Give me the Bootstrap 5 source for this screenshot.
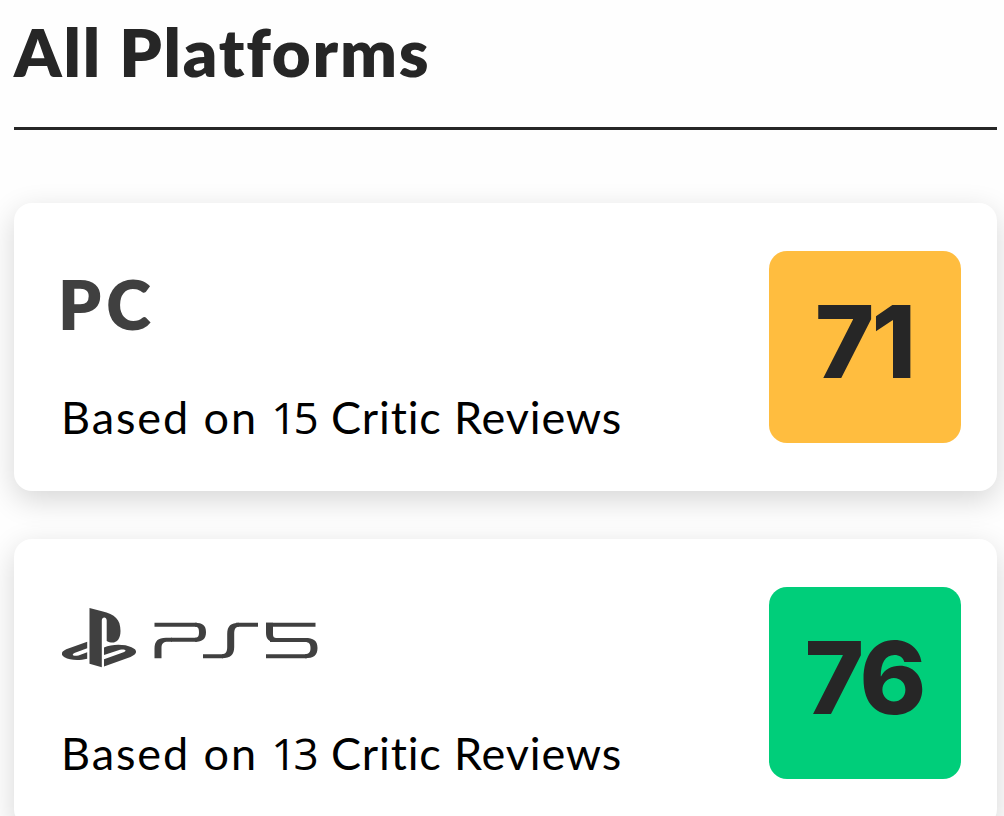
<!DOCTYPE html>
<html lang="en">
<head>
    <meta charset="UTF-8">
    <meta name="viewport" content="width=device-width, initial-scale=1.0">
    <title>All Platforms</title>
    <link href="https://cdn.jsdelivr.net/npm/bootstrap@5.3.0/dist/css/bootstrap.min.css" rel="stylesheet">
    <style>
        body {
            font-family: Lato, "Liberation Sans", sans-serif;
            background-color: #fefefe;
            color: #262626;
            overflow: hidden;
        }

        .platforms {
            padding: 9px 7px 0 14px;
        }

        .platforms-title {
            height: 121px;
            font-size: 67px;
            line-height: 84px;
            font-weight: 800;
            letter-spacing: 1.8px;
            border-bottom: 3px solid #262626;
            margin-bottom: 73px;
        }

        .platform-list {
            gap: 48px;
        }

        /* platform cards */
        .platform-card {
            height: 288px;
            padding: 48px 36px 48px 48px;
            border-radius: 18px;
            background-color: #fff;
            box-shadow: 0 9px 30px rgba(0, 0, 0, 0.16);
        }

        .platform-name {
            height: 102px;
            color: #404040;
            font-size: 68px;
            line-height: 106px;
            font-weight: 800;
            letter-spacing: 5px;
        }

        .platform-label {
            margin-left: -4px;
        }

        .review-count {
            color: #000;
            font-size: 45px;
            line-height: 60px;
            margin-top: 34px;
            margin-left: -1px;
            letter-spacing: 0.85px;
        }

        .review-prefix {
            letter-spacing: 1.9px;
        }

        .count {
            font-family: "Open Sans", sans-serif;
            font-size: 44px;
            letter-spacing: -3px;
            margin-right: 3px;
        }

        /* score tiles */
        .score {
            width: 192px;
            height: 192px;
            padding: 0 2px 12px 0;
            border-radius: 18px;
            font-family: Inter, sans-serif;
            font-size: 101px;
            line-height: 1;
            font-weight: 800;
            letter-spacing: -3px;
        }

        .score-mixed {
            background-color: #ffbd3f;
        }

        .score-good {
            background-color: #00ce7a;
        }
    </style>
</head>
<body>

    <main class="platforms">
        <h1 class="platforms-title">All Platforms</h1>

        <div class="platform-list d-flex flex-column">
            <section class="platform-card d-flex justify-content-between">
                <div>
                    <h2 class="platform-name platform-label mb-0">PC</h2>
                    <p class="review-count mb-0"><span class="review-prefix">Based on </span><span class="count">15</span> Critic Reviews</p>
                </div>
                <div class="score score-mixed d-flex align-items-center justify-content-center">71</div>
            </section>

            <section class="platform-card d-flex justify-content-between">
                <div>
                    <div class="platform-name d-flex align-items-center">
                        <svg width="257" height="60" viewBox="62 608 257 60" fill="#404040" role="img" aria-label="PlayStation 5">
                            <!-- PlayStation symbol -->
                            <path d="M89.5 608 L102 611.2 C115 614.5 120.5 619 120.5 631 C120.5 641.5 114 645 106.7 641 L106.7 620.5 C106.7 616.5 101.8 616.5 101.8 620.5 L101.8 667.3 L89.5 663.7 Z"/>
                            <path d="M87.2 641.8 L87.2 648.2 L75 652.8 C70.5 655 73.5 656.3 78.5 655.4 L87.2 652.2 L87.2 658.7 C78 661 69.5 660 64.5 657.2 C60 654.5 61 650.8 69 648.3 Z"/>
                            <path d="M104 647.5 C112 644 124.5 644 131.5 647.3 C138.5 650.2 137 654.3 130.5 656.9 L104 666.5 L104 659.2 L123.5 652.3 C127.8 650.2 124.5 648.8 120 649.7 L104 655 Z"/>
                            <!-- PS5 wordmark -->
                            <g fill="none" stroke="#404040">
                                <path stroke-width="4" d="M154.5 624.8 H197 M171 639.8 H197 M203 656.2 H223 M236 624.8 H258 M266 624.8 H315.5 M270 640 H307 M266 656.2 H307"/>
                            </g>
                            <path d="M195 622.8 C202.5 622.8 206 625.5 206 632.2 C206 639 202.5 641.8 195 641.8 V637.8 C198 637.8 199 636 199 632.2 C199 628.5 198 626.8 195 626.8 Z"/>
                            <path d="M154.5 658.2 V649 C154.5 641 158 637.8 166 637.8 H172 V641.8 H168 C163.5 641.8 161.5 643.5 161.5 648 V658.2 Z"/>
                            <path d="M222 658.2 C230.5 658.2 234.2 655 234.2 647 V634 C234.2 629 235.5 626.8 239 626.8 V622.8 C231 622.8 227.2 626 227.2 634 V647 C227.2 652 225.5 654.2 222 654.2 Z"/>
                            <path d="M266 622.8 H273 V634 C273 637 274 638 277 638 V642 H275 C269 642 266 639 266 633 Z"/>
                            <path d="M305 638 C313.5 638 317.5 640.5 317.5 648 C317.5 655.5 313.5 658.2 305 658.2 V654.2 C309 654.2 310.5 652 310.5 648 C310.5 644 309 642 305 642 Z"/>
                        </svg>
                    </div>
                    <p class="review-count mb-0"><span class="review-prefix">Based on </span><span class="count">13</span> Critic Reviews</p>
                </div>
                <div class="score score-good d-flex align-items-center justify-content-center">76</div>
            </section>
        </div>
    </main>

    <script src="https://cdn.jsdelivr.net/npm/bootstrap@5.3.0/dist/js/bootstrap.bundle.min.js"></script>
</body>
</html>
